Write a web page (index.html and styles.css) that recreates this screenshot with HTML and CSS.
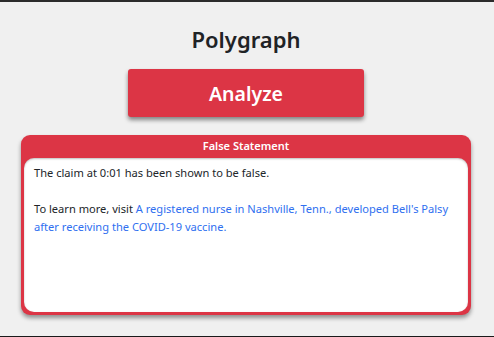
FILE: index.html
```html
<!DOCTYPE html>
<html lang="en">
<head>
  <meta charset="UTF-8">
  <meta name="viewport" content="width=device-width, initial-scale=1.0">
  <title>Polygraph</title>
  <link rel="stylesheet" href="styles.css">
</head>
<body>
  <div class="popup">
    <h1 class="title">Polygraph</h1>
    <button type="button" class="btn-analyze">Analyze</button>
    <div class="result">
      <div class="result-header">False Statement</div>
      <div class="result-body">
        <p>The claim at 0:01 has been shown to be false.</p>
        <p>To learn more, visit <a href="#">A registered nurse in Nashville, Tenn., developed Bell's Palsy after receiving the COVID-19 vaccine.</a></p>
      </div>
    </div>
  </div>
</body>
</html>
```

FILE: styles.css
```css
html, body {
  margin: 0;
  padding: 0;
}

body {
  background: #f0f0f0;
  font-family: "Noto Sans", "Open Sans", sans-serif;
  color: #212529;
}

.popup {
  box-sizing: border-box;
  height: 337px;
  border-top: 2px solid #2b2b2b;
  border-bottom: 1px solid #1a1a1a;
  display: flex;
  flex-direction: column;
  align-items: center;
  padding-right: 2px;
}

.title {
  margin: 22px 0 0;
  font-size: 22px;
  font-weight: 600;
  line-height: 30px;
  color: #1f2326;
}

.btn-analyze {
  margin-top: 15px;
  width: 236px;
  height: 48px;
  background-color: #dc3545;
  color: #fff;
  border: none;
  border-radius: 3px;
  font-family: inherit;
  font-size: 19.5px;
  font-weight: 600;
  box-shadow: 0 3px 4px rgba(0, 0, 0, 0.45);
  cursor: pointer;
}

.result {
  margin-top: 18px;
  width: 450px;
  height: 180px;
  box-sizing: border-box;
  background: #dc3545;
  border-radius: 9px;
  padding: 0 3px 3px;
  display: flex;
  flex-direction: column;
  box-shadow: 0 3px 4px rgba(0, 0, 0, 0.4);
}

.result-header {
  height: 23px;
  line-height: 22px;
  text-align: center;
  color: #fff;
  font-size: 11px;
  font-weight: 600;
}

.result-body {
  flex: 1;
  background: #fff;
  border-radius: 10px;
  padding: 6px 10px;
  font-size: 11.1px;
  line-height: 18px;
  color: #212529;
  box-shadow: inset 0 1px 2px rgba(0, 0, 0, 0.25);
}

.result-body p {
  margin: 0 0 18px;
}

.result-body a {
  color: #2f6ff0;
  text-decoration: none;
}
```
